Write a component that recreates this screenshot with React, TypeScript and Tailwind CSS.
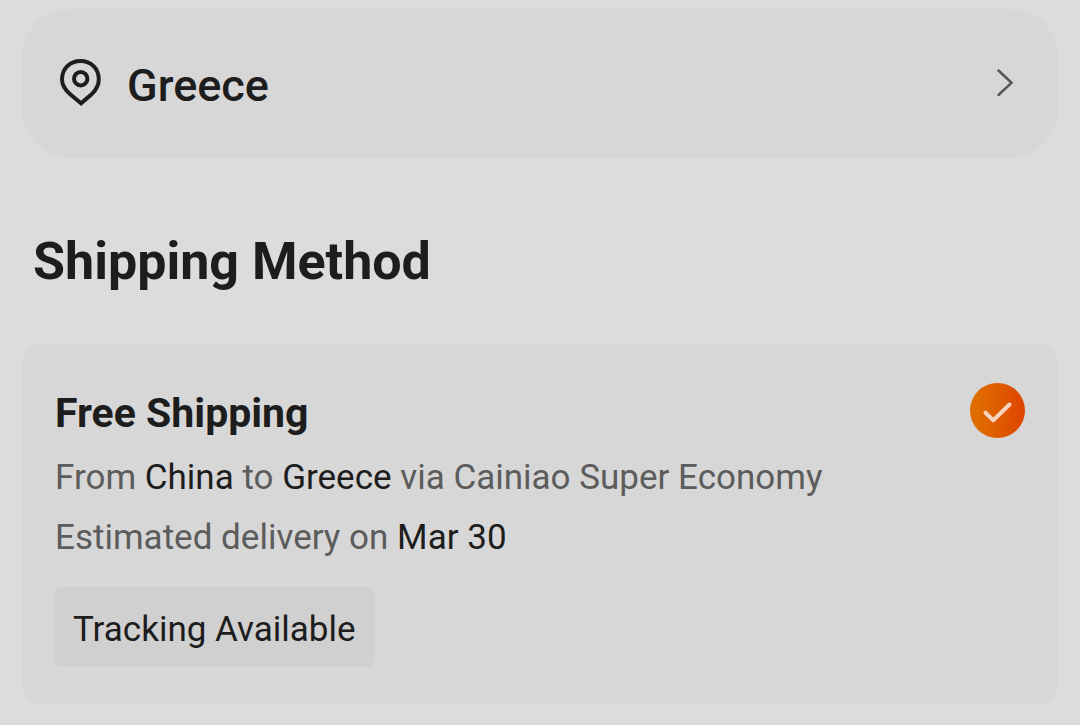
import React, { useState } from "react";

interface ShippingMethod {
  id: string;
  title: string;
  origin: string;
  destination: string;
  carrier: string;
  deliveryDate: string;
  tag: string;
}

const METHODS: ShippingMethod[] = [
  {
    id: "economy",
    title: "Free Shipping",
    origin: "China",
    destination: "Greece",
    carrier: "Cainiao Super Economy",
    deliveryDate: "Mar 30",
    tag: "Tracking Available",
  },
];

function PinIcon() {
  return (
    <svg width="42" height="48" viewBox="0 0 42 48" fill="none" stroke="currentColor" strokeWidth="4" aria-hidden="true">
      <path d="M21 44.300 L10.500 35.600 C5 30.800 2 26 2 20.500 C2 9.500 10 2 20.500 2 C31 2 38.800 9.500 38.800 20.500 C38.800 26 36.300 30.800 31.300 35.600 Z" />
      <circle cx="20.700" cy="19.700" r="6.700" />
    </svg>
  );
}

function ChevronIcon() {
  return (
    <svg width="18" height="30" viewBox="0 0 18 30" fill="none" stroke="currentColor" strokeWidth="2.5" aria-hidden="true">
      <path d="M2.500 2.500 L15.500 14.800 L2.500 27" strokeLinecap="round" />
    </svg>
  );
}

function CheckIcon() {
  return (
    <svg className="pointer-events-none absolute inset-0" width="55" height="55" viewBox="0 0 55 55" fill="none" aria-hidden="true">
      <path d="M15.500 29.700 L23.300 37.300 L39.500 21.500" stroke="#f5d3bd" strokeWidth="4" strokeLinecap="round" strokeLinejoin="round" />
    </svg>
  );
}

export default function App() {
  const [selected, setSelected] = useState("economy");

  return (
    <main className="min-h-screen bg-[#dcdcdc] px-[22px] pt-[9px] pb-5 font-['Roboto',sans-serif] text-[#1d1d1d]">
      {/* Destination */}
      <button
        type="button"
        className="flex w-full cursor-pointer items-center rounded-[48px] bg-[#d7d7d7] pt-[41px] pr-11 pb-[42px] pl-[38px] text-left"
      >
        <PinIcon />
        <span className="ml-[25px] flex-1 pt-1.5 text-[45px] leading-[60px] font-medium">Greece</span>
        <span className="text-[#555555]">
          <ChevronIcon />
        </span>
      </button>

      <h1 className="mt-[72px] mb-[50px] px-[11px] text-[52px] leading-[64px] font-bold">Shipping Method</h1>

      {/* Methods */}
      {METHODS.map((m) => (
        <section key={m.id} className="rounded-[20px] bg-[#d7d7d7] px-[33px] pt-[39px] pb-[38px]">
          <div className="mb-[5px] flex items-start justify-between">
            <label htmlFor={m.id} className="text-[41px] leading-[60px] font-bold">
              {m.title}
            </label>
            <div className="relative size-[55px] rounded-full bg-gradient-to-r from-[#de7000] to-[#de4400]">
              <input
                id={m.id}
                type="radio"
                name="shipping"
                checked={selected === m.id}
                onChange={() => setSelected(m.id)}
                className="size-full cursor-pointer appearance-none rounded-full"
              />
              {selected === m.id && <CheckIcon />}
            </div>
          </div>
          <p className="text-[35px] leading-[60px] text-[#5c5c5c]">
            From <span className="text-[#1d1d1d]">{m.origin}</span> to{" "}
            <span className="text-[#1d1d1d]">{m.destination}</span> via {m.carrier}
          </p>
          <p className="text-[35px] leading-[60px] text-[#5c5c5c]">
            Estimated delivery on <span className="text-[#1d1d1d]">{m.deliveryDate}</span>
          </p>
          <span className="mt-[19px] inline-block rounded-md bg-[#d0d0d0] px-[18px] pt-[13px] pb-[7px] text-[35px] leading-[60px]">
            {m.tag}
          </span>
        </section>
      ))}
    </main>
  );
}
